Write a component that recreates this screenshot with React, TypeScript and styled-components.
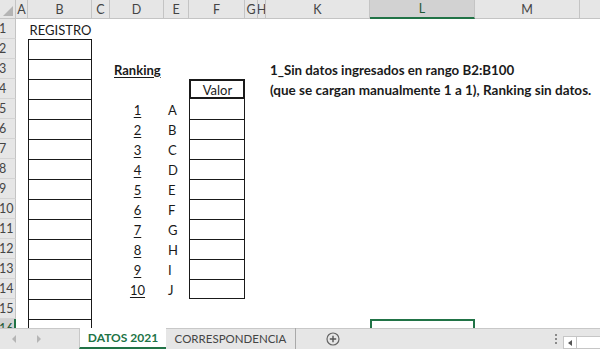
import React from "react";
import styled, { createGlobalStyle, css } from "styled-components";

const Global = createGlobalStyle`
  html, body { margin: 0; padding: 0; background: #fff; }
  body { width: 600px; height: 349px; overflow: hidden; font-family: Lato, "Open Sans", sans-serif; }
`;

const GREEN = "#217346";
const COLS = [
  { key: "A", w: 12 },
  { key: "B", w: 64 },
  { key: "C", w: 18 },
  { key: "D", w: 54 },
  { key: "E", w: 25 },
  { key: "F", w: 56 },
  { key: "G", w: 13 },
  { key: "H", w: 8 },
  { key: "K", w: 104 },
  { key: "L", w: 105 },
  { key: "M", w: 105 },
  { key: "N", w: 60 },
];
const ROWS = 16;

const Window = styled.div`
  width: 600px;
  height: 349px;
  display: flex;
  flex-direction: column;
  overflow: hidden;
`;

const Sheet = styled.div`
  flex: 0 0 328px;
  overflow: hidden;
  display: grid;
  grid-template-columns: 16px ${COLS.map((c) => c.w + "px").join(" ")};
  grid-template-rows: 19px repeat(${ROWS}, 20px);
  background: #fff;
`;

const Corner = styled.div`
  background: #e6e6e6;
  border-right: 1px solid #c4c4c4;
  border-bottom: 1px solid #c4c4c4;
  box-sizing: border-box;
  position: relative;
  overflow: hidden;
`;

const SelectAll = styled.svg`
  position: absolute;
  right: 2px;
  bottom: 2px;
`;

const ColHead = styled.div<{ $active?: boolean }>`
  box-sizing: border-box;
  background: ${(p) => (p.$active ? "#d2d2d2" : "#e6e6e6")};
  border-right: 1px solid #c4c4c4;
  border-bottom: ${(p) => (p.$active ? `2px solid ${GREEN}` : "1px solid #c4c4c4")};
  display: flex;
  align-items: center;
  justify-content: center;
  font-size: 12.5px;
  color: ${(p) => (p.$active ? "#1e5a37" : "#444")};
  overflow: hidden;
  white-space: nowrap;
`;

const RowHead = styled.div<{ $active?: boolean }>`
  box-sizing: border-box;
  background: ${(p) => (p.$active ? "#d2d2d2" : "#e6e6e6")};
  border-right: ${(p) => (p.$active ? `2px solid ${GREEN}` : "1px solid #c4c4c4")};
  border-bottom: 1px solid #d4d4d4;
  display: flex;
  align-items: center;
  font-size: 12.5px;
  color: ${(p) => (p.$active ? "#1e5a37" : "#444")};
  overflow: hidden;
  white-space: nowrap;
`;

const RowNum = styled.span`
  margin-left: -1px;
`;

type CellProps = {
  $t?: number;
  $b?: number;
  $l?: number;
  $r?: number;
  $align?: "left" | "center" | "right";
  $bold?: boolean;
  $u?: boolean;
  $sel?: boolean;
  $size?: number;
};

const Cell = styled.div<CellProps>`
  box-sizing: border-box;
  display: flex;
  align-items: center;
  justify-content: ${(p) => (p.$align === "center" ? "center" : p.$align === "right" ? "flex-end" : "flex-start")};
  padding: 1px 3px 0 4px;
  font-size: ${(p) => p.$size ?? 13}px;
  color: #1a1a1a;
  white-space: nowrap;
  overflow: visible;
  font-weight: ${(p) => (p.$bold ? 700 : 400)};
  text-decoration: ${(p) => (p.$u ? "underline" : "none")};
  text-underline-offset: 2px;
  border-top: ${(p) => (p.$t ? `${p.$t}px solid #1a1a1a` : "none")};
  border-bottom: ${(p) => (p.$b ? `${p.$b}px solid #1a1a1a` : "none")};
  border-left: ${(p) => (p.$l ? `${p.$l}px solid #1a1a1a` : "none")};
  border-right: ${(p) => (p.$r ? `${p.$r}px solid #1a1a1a` : "none")};
  ${(p) =>
    p.$sel &&
    css`
      border: 2px solid ${GREEN};
    `}
`;

const TabBar = styled.div`
  flex: 1;
  display: flex;
  align-items: stretch;
  background: #e6e6e6;
  border-top: 1px solid #c8c8c8;
  box-sizing: border-box;
`;

const Nav = styled.div`
  width: 79px;
  display: flex;
  align-items: center;
  gap: 19px;
  padding-left: 12px;
  box-sizing: border-box;
`;

const Tab = styled.div<{ $active?: boolean; $w: number }>`
  width: ${(p) => p.$w}px;
  box-sizing: border-box;
  display: flex;
  align-items: center;
  justify-content: center;
  font-size: ${(p) => (p.$active ? 12 : 11.5)}px;
  margin-top: -1px;
  font-weight: ${(p) => (p.$active ? 700 : 400)};
  color: ${(p) => (p.$active ? GREEN : "#444")};
  background: ${(p) => (p.$active ? "#fff" : "transparent")};
  border-bottom: ${(p) => (p.$active ? `2px solid ${GREEN}` : "none")};
  border-right: ${(p) => (p.$active ? "none" : "1px solid #a9a9a9")};
  border-left: ${(p) => (p.$active ? "1px solid #c8c8c8" : "none")};
`;

const AddBtn = styled.div`
  width: 74px;
  display: flex;
  align-items: center;
  justify-content: center;
`;

const Spacer = styled.div`
  flex: 1;
`;

const Dots = styled.div`
  width: 14px;
  display: flex;
  flex-direction: column;
  align-items: center;
  justify-content: center;
  gap: 2px;
  span {
    width: 2px;
    height: 2px;
    background: #8a8a8a;
  }
`;

const Scroll = styled.div`
  width: 37px;
  margin-top: 7px;
  display: flex;
  box-sizing: border-box;
  border: 1px solid #c6c6c6;
  border-right: none;
  background: #fff;
`;

const ScrollArrow = styled.div`
  width: 12px;
  border-right: 1px solid #c6c6c6;
  display: flex;
  align-items: center;
  justify-content: center;
`;

type Spec = CellProps & { text?: string };

function cellSpec(row: number, col: string): Spec {
  if (col === "B") {
    if (row === 1) return { text: "REGISTRO", $align: "center" };
    return { $t: 1, $l: 1, $r: 1 };
  }
  if (col === "D") {
    if (row === 3) return { text: "Ranking", $bold: true, $u: true };
    if (row >= 5 && row <= 14) return { text: String(row - 4), $u: true, $align: "center" };
  }
  if (col === "E" && row >= 5 && row <= 14) {
    return { text: "ABCDEFGHIJ"[row - 5], $align: "left" };
  }
  if (col === "F") {
    if (row === 4) return { text: "Valor", $align: "center", $t: 2, $b: 2, $l: 2, $r: 2 };
    if (row === 5) return { $l: 1, $r: 1 };
    if (row > 5 && row <= 14) return { $t: 1, $l: 1, $r: 1, $b: row === 14 ? 1 : 0 };
  }
  if (col === "K") {
    if (row === 3) return { text: "1_Sin datos ingresados en rango B2:B100", $bold: true, $size: 13.3 };
    if (row === 4) return { text: "(que se cargan manualmente 1 a 1), Ranking sin datos.", $bold: true, $size: 13.5 };
  }
  if (col === "L" && row === 16) return { $sel: true };
  return {};
}

const Arrow = ({ dir }: { dir: "l" | "r" }) => (
  <svg width="5" height="8" viewBox="0 0 5 8">
    {dir === "l" ? <path d="M4 0 L0 4 L4 8 Z" fill="#b5b5b5" /> : <path d="M1 0 L5 4 L1 8 Z" fill="#b5b5b5" />}
  </svg>
);

export default function App() {
  return (
    <Window>
      <Global />
      <Sheet>
        <Corner>
          <SelectAll width="10" height="10" viewBox="0 0 10 10">
            <path d="M10 0 L10 10 L0 10 Z" fill="#b4b4b4" />
          </SelectAll>
        </Corner>
        {COLS.map((c) => (
          <ColHead key={c.key} $active={c.key === "L"}>
            {c.key === "N" ? "" : c.key}
          </ColHead>
        ))}
        {Array.from({ length: ROWS }, (_, i) => i + 1).map((r) => (
          <React.Fragment key={r}>
            <RowHead $active={r === 16}>
              <RowNum>{r}</RowNum>
            </RowHead>
            {COLS.map((c) => {
              const { text, ...props } = cellSpec(r, c.key);
              return (
                <Cell key={c.key} {...props}>
                  {text}
                </Cell>
              );
            })}
          </React.Fragment>
        ))}
      </Sheet>
      <TabBar>
        <Nav>
          <Arrow dir="l" />
          <Arrow dir="r" />
        </Nav>
        <Tab $active $w={87}>DATOS 2021</Tab>
        <Tab $w={130}>CORRESPONDENCIA</Tab>
        <AddBtn>
          <svg width="14" height="14" viewBox="0 0 14 14">
            <circle cx="7" cy="7" r="6" fill="none" stroke="#666" strokeWidth="1.2" />
            <path d="M7 3.8 V10.2 M3.8 7 H10.2" stroke="#555" strokeWidth="1.4" />
          </svg>
        </AddBtn>
        <Spacer />
        <Dots>
          <span />
          <span />
          <span />
        </Dots>
        <Scroll>
          <ScrollArrow>
            <svg width="4" height="6" viewBox="0 0 4 6">
              <path d="M4 0 L0 3 L4 6 Z" fill="#555" />
            </svg>
          </ScrollArrow>
        </Scroll>
      </TabBar>
    </Window>
  );
}
